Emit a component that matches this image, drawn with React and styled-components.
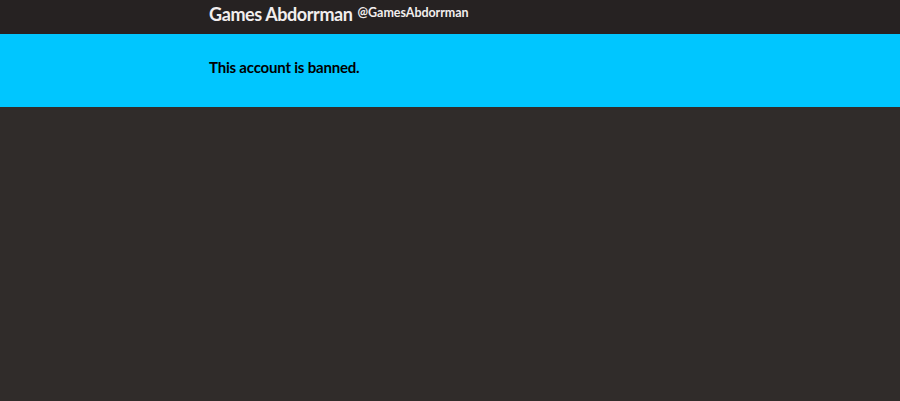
import React from "react";
import styled, { createGlobalStyle } from "styled-components";

const colors = {
  header: "#262222",
  page: "#302c2a",
  banner: "#00c6ff",
  light: "#f2eeee",
  dark: "#000000",
};

const GlobalStyle = createGlobalStyle`
  html, body {
    margin: 0;
    padding: 0;
    background: ${colors.page};
    font-family: Lato, "Open Sans", sans-serif;
  }
`;

const Page = styled.div`
  min-height: 401px;
  background: ${colors.page};
`;

const Header = styled.header`
  background: ${colors.header};
  height: 34px;
`;

const Inner = styled.div`
  width: 482px;
  margin: 0 auto;
  display: flex;
  align-items: flex-start;
  gap: 5px;
`;

const Name = styled.h1`
  margin: 0;
  padding-top: 3px;
  color: ${colors.light};
  font-size: 18px;
  font-weight: bold;
  letter-spacing: -0.4px;
  line-height: 22px;
`;

const Handle = styled.span`
  padding-top: 5px;
  color: ${colors.light};
  font-size: 12.5px;
  font-weight: bold;
  letter-spacing: -0.05px;
  line-height: 15px;
`;

const Banner = styled.div`
  background: ${colors.banner};
  height: 73px;
`;

const BannerText = styled.p`
  width: 482px;
  margin: 0 auto;
  padding-top: 23px;
  color: ${colors.dark};
  font-size: 15px;
  font-weight: bold;
  letter-spacing: -0.2px;
  line-height: 20px;
`;

const App = () => {
  return (
    <Page>
      <GlobalStyle />
      <Header>
        <Inner>
          <Name>Games Abdorrman</Name>
          <Handle>@GamesAbdorrman</Handle>
        </Inner>
      </Header>
      <Banner>
        <BannerText>This account is banned.</BannerText>
      </Banner>
    </Page>
  );
};

export default App;
